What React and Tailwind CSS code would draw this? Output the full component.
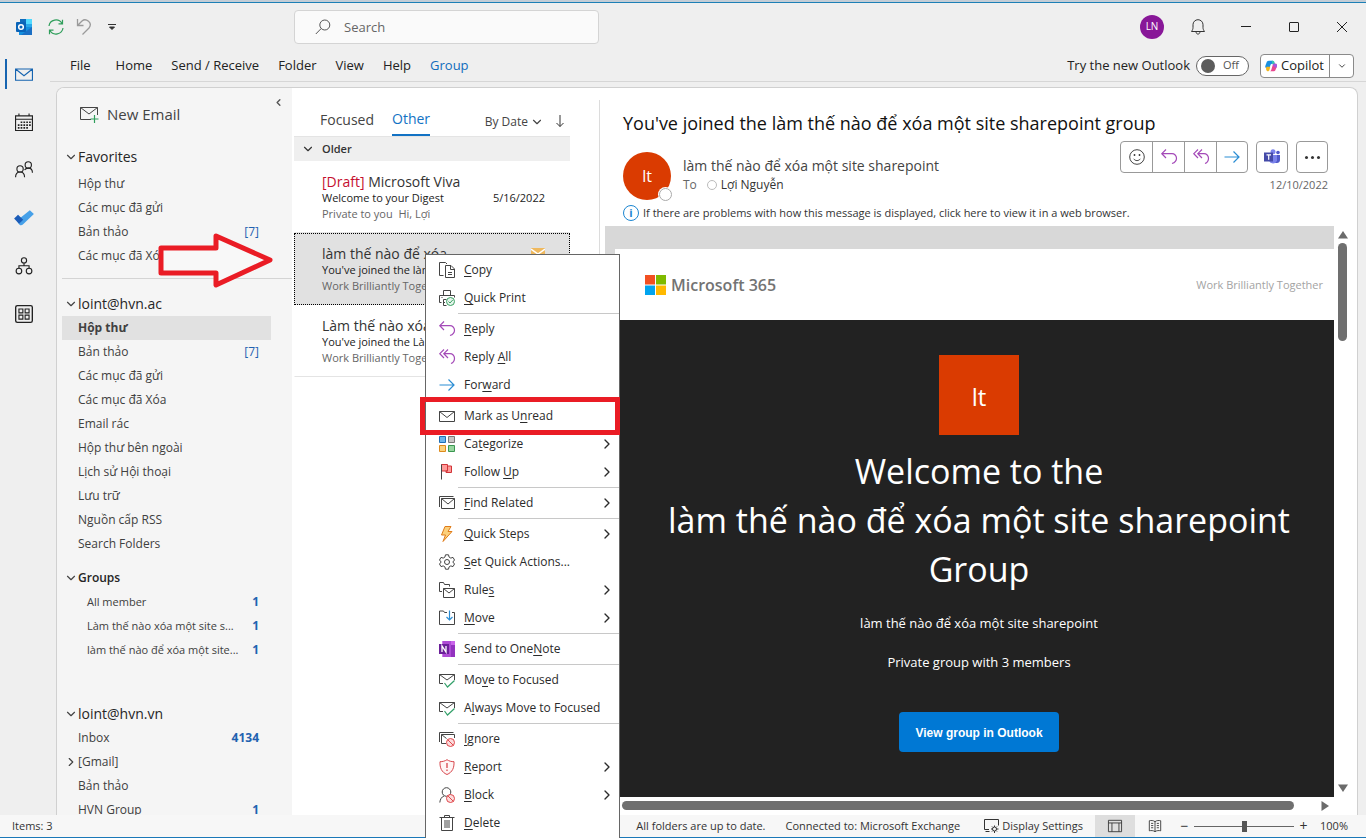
import React, { useState } from 'react';
import { ChevronDown, ChevronLeft, ChevronRight } from 'lucide-react';

const favorites = [
  { name: 'Hộp thư' },
  { name: 'Các mục đã gửi' },
  { name: 'Bản thảo', count: '[7]' },
  { name: 'Các mục đã Xóa' },
];

const accountFolders = [
  { name: 'Hộp thư', selected: true },
  { name: 'Bản thảo', count: '[7]' },
  { name: 'Các mục đã gửi' },
  { name: 'Các mục đã Xóa' },
  { name: 'Email rác' },
  { name: 'Hộp thư bên ngoài' },
  { name: 'Lịch sử Hội thoại' },
  { name: 'Lưu trữ' },
  { name: 'Nguồn cấp RSS' },
  { name: 'Search Folders' },
];

const groups = [
  { name: 'All member', count: '1', bold: true },
  { name: 'Làm thế nào xóa một site s...', count: '1', bold: true },
  { name: 'làm thế nào để xóa một site...', count: '1', bold: true },
];

const secondAccount = [
  { name: 'Inbox', count: '4134', bold: true },
  { name: '[Gmail]', closed: true },
  { name: 'Bản thảo' },
  { name: 'HVN Group', count: '1', bold: true },
];

const messages = [
  { draft: true, from: 'Microsoft Viva', subject: 'Welcome to your Digest', preview: 'Private to you  Hi, Lợi', date: '5/16/2022' },
  { from: 'làm thế nào để xóa', subject: "You've joined the làm", preview: 'Work Brilliantly Together', selected: true },
  { from: 'Làm thế nào xóa', subject: "You've joined the Làm", preview: 'Work Brilliantly Together' },
];

// '&' marks the access key of a command, '-' is a separator
const menuItems = [
  { label: '&Copy', icon: 'copy' },
  { label: '&Quick Print', icon: 'print' },
  '-',
  { label: '&Reply', icon: 'reply' },
  { label: 'Reply &All', icon: 'replyAll' },
  { label: 'For&ward', icon: 'forward' },
  '-',
  { label: 'Mark as U&nread', icon: 'mail', marked: true },
  { label: 'Ca&tegorize', icon: 'categorize', sub: true },
  { label: 'Follow &Up', icon: 'flag', sub: true },
  '-',
  { label: '&Find Related', icon: 'related', sub: true },
  '-',
  { label: '&Quick Steps', icon: 'bolt', sub: true },
  { label: '&Set Quick Actions...', icon: 'gear' },
  { label: 'Rule&s', icon: 'rules', sub: true },
  { label: '&Move', icon: 'move', sub: true },
  '-',
  { label: 'Send to One&Note', icon: 'onenote' },
  '-',
  { label: 'Mo&ve to Focused', icon: 'mailCheck' },
  { label: 'A&lways Move to Focused', icon: 'mailCheck' },
  '-',
  { label: '&Ignore', icon: 'ignore' },
  { label: '&Report', icon: 'report', sub: true },
  { label: '&Block', icon: 'block', sub: true },
  { label: '&Delete', icon: 'trash' },
];

const noSign = (
  <g stroke="#e0474c" fill="#fbdcdc">
    <circle cx="11.500" cy="11.500" r="4" />
    <path d="M8.700 8.700l5.600 5.600" />
  </g>
);

const iconShapes = {
  copy: (
    <>
      <path d="M4.500 13.500h-4v-13h6l1.500 1.500" />
      <path d="M6.500 3.500h5.500l3.500 3.500v8.500h-9zM11.500 3.500v4h4M9 10.500h4M9 12.500h4" fill="#fff" />
    </>
  ),
  print: (
    <>
      <path d="M4.500 5.500v-5h7v5M6 12.500h-1.500v-3h3M2.500 12.500h-2v-7h15v2M2.500 7.500h1" />
      <path d="M4.500 10v5.500h3" />
      <circle cx="11.500" cy="11.500" r="4" stroke="#3a9f62" fill="#e6f5ec" />
      <path d="M9.500 11.500l1.500 1.500 2.700-3" stroke="#3a9f62" />
    </>
  ),
  reply: <path d="M5 .5L.8 4.700 5 9M.8 4.700H11a4.500 4.500 0 0 1 4.500 4.500c0 2.500-1.500 4.300-4.500 5.300" stroke="#a44ab8" strokeWidth="1.2" />,
  replyAll: (
    <path d="M5 .5L.8 4.700 5 9M9 .5L4.800 4.700 9 9M4.800 4.700h6.200a4.500 4.500 0 0 1 4.500 4.500c0 2.500-1 4.300-3.500 5.300" stroke="#a44ab8" strokeWidth="1.2" />
  ),
  forward: <path d="M.5 8h14.500M9.500 2.500L15 8l-5.500 5.500" stroke="#2a8dd4" strokeWidth="1.2" />,
  mail: <path d="M.5 3.500h15v10H.5zM.5 3.500L8 9.500l7.500-6" />,
  categorize: (
    <>
      <path d="M.5 .5h6v6h-6z" fill="#6cb4ea" stroke="#1f6fb5" />
      <path d="M9.500 .5h6v6h-6z" fill="#c8c6c4" stroke="#7a7876" />
      <path d="M.5 9.500h6v6h-6z" fill="#fbd27c" stroke="#dd8a1c" />
      <path d="M9.500 9.500h6v6h-6z" fill="#98d6a0" stroke="#3a9650" />
    </>
  ),
  flag: (
    <>
      <path d="M2.500 .5h6v6.500h-6zM8.500 2h4v6.500H7V7h1.500z" fill="#ff9a98" stroke="#d13438" />
      <path d="M2.500 .5v15" stroke="#444" />
    </>
  ),
  related: <path d="M.5 12V1.500h14M2.500 3.500h13v10h-13zM2.500 3.500L9 9l6.500-5.500" />,
  bolt: <path d="M6 .5h6L9 5.500h4L4 15.500l2.500-6.500H2.500z" fill="#fbd07c" stroke="#e07b18" />,
  gear: (
    <>
      <path d="M6.500 .8h3l.6 2.300 1.700 1 2.200-.7 1.500 2.600L13.800 8l1.700 2-1.500 2.600-2.200-.7-1.700 1-.6 2.300h-3l-.6-2.300-1.700-1-2.200 .7L.5 10l1.700-2L.5 6 2 3.400l2.200 .7 1.700-1z" />
      <circle cx="8" cy="8" r="2.500" />
    </>
  ),
  rules: (
    <>
      <path d="M3 9.500H.5v-9h4l1 2h5v2" />
      <path d="M4.500 6.500h11v9h-11zM4.500 6.500l5.500 4.500 5.500-4.500" fill="#fff" />
    </>
  ),
  move: (
    <>
      <path d="M8 2.500H5.500l-1-1.500h-4v13.500h15V2.500H13" />
      <path d="M10.500 .5v9.500M7.500 7l3 3 3-3" stroke="#2a8dd4" strokeWidth="1.200" />
    </>
  ),
  onenote: (
    <>
      <path d="M3.500 0H16v16H3.500z" fill="#ca64ea" stroke="none" />
      <path d="M12 4h4v12h-4z" fill="#9332bf" stroke="none" />
      <path d="M3.500 0H12v16H3.500z" fill="#ae4bd5" stroke="none" />
      <path d="M0 3h10v10H0z" fill="#6b1f99" stroke="none" />
      <path d="M3 11V5l4 6V5" stroke="#fff" strokeWidth="1.3" />
    </>
  ),
  mailCheck: (
    <>
      <path d="M4 11.500H.5v-9h15V8M.5 2.500L8 8l7.500-5.500" />
      <path d="M5.500 11l3 4 7-6.500" stroke="#33a06a" strokeWidth="1.2" />
    </>
  ),
  ignore: (
    <>
      <path d="M.5 11V1.500h14M7 12.500H2.500v-9h13V7M2.500 3.500l5 4" />
      {noSign}
    </>
  ),
  report: (
    <>
      <path d="M8 .7c2 1.400 4.500 2 7 2 .3 6-1.500 10.500-7 12.800C2.500 13.200 .7 8.700 1 2.700c2.500 0 5-.6 7-2z" stroke="#d8464c" fill="#fff5f5" />
      <path d="M8 4v5M8 10.500V12" stroke="#d8464c" strokeWidth="1.3" />
    </>
  ),
  block: (
    <>
      <circle cx="7.500" cy="5" r="4.300" />
      <path d="M.8 15.500c.4-3.500 1.800-5.500 4.200-6.500" />
      {noSign}
    </>
  ),
  trash: <path d="M.5 2.500h15M5.500 2.500v-2h5v2M2.500 2.500v13h11v-13M6 5v8M8 5v8M10 5v8" />,
  calendar: (
    <>
      <path d="M.5 2.500h15v13H.5zM.5 5.500h15M3.500 .5v2M12.500 .5v2" />
      <path d="M5 8.200h9M2.500 10.700h11.500M2.500 13.200h9" strokeDasharray="1.500 1" strokeWidth="1.500" />
    </>
  ),
  people: (
    <>
      <circle cx="11.800" cy="3.500" r="2.800" />
      <circle cx="4.500" cy="7" r="2.800" />
      <path d="M.5 14.500c0-3 1.500-4.700 4-4.700s4 1.700 4 4.700M8.500 8c.7-1.200 1.800-1.700 3.300-1.700 2.400 0 3.700 1.700 3.700 4.200" />
    </>
  ),
  todo: (
    <>
      <path d="M4 14L1.500 10.500 13.200 1 16.800 4.500 7 13.800c-.9 .9-2.100 .9-3 .2z" fill="#46a0e8" stroke="none" />
      <path d="M-.8 8.500L2.700 5l4.600 4.500-3.700 3.700z" fill="#1b5cb8" stroke="none" />
    </>
  ),
  org: (
    <>
      <circle cx="8" cy="3" r="2.300" />
      <circle cx="3.500" cy="12.500" r="2.500" />
      <circle cx="12.500" cy="12.500" r="2.500" />
      <path d="M8 5.300v2.500M3.500 10V7.800h9V10" />
    </>
  ),
  apps: (
    <>
      <rect x=".6" y=".6" width="14.800" height="14.800" rx="1.500" strokeWidth="1.200" />
      <path d="M3.500 3.500h3.500v3.500H3.500zM9 3.500h3.500v3.500H9zM3.500 9h3.500v3.500H3.500zM9 9h3.500v3.500H9z" />
    </>
  ),
  smile: (
    <>
      <circle cx="8" cy="8" r="7.300" />
      <path d="M4.700 9.800c1.500 2.400 5.100 2.400 6.600 0" />
      <path d="M5.500 5v2M10.500 5v2" strokeWidth="1.500" />
    </>
  ),
  teams: (
    <>
      <circle cx="14" cy="3.500" r="1.800" fill="#5059c9" stroke="none" />
      <circle cx="9" cy="2.800" r="2.500" fill="#7b83eb" stroke="none" />
      <path d="M11 6h5v5c0 2-1.500 3-3 3h-2z" fill="#5059c9" stroke="none" />
      <path d="M5 6h8v5.500a4.200 4.200 0 0 1-8 0z" fill="#7b83eb" stroke="none" />
      <path d="M0 3.500h9v9H0z" fill="#444aa8" stroke="none" />
      <path d="M2.500 5.800h4.500M4.700 5.800v5" stroke="#fff" strokeWidth="1.200" />
    </>
  ),
  bell: <path d="M1.500 12.500h13c-1-1.500-1.500-2.500-1.500-4V5.700a5 5 0 0 0-10 0v2.800c0 1.500-.5 2.500-1.500 4zM6 12.700c.2 3.200 3.800 3.200 4 0" />,
  sync: (
    <path d="M1 7a7 7 0 0 1 13-2.500M14.500 .8v4h-4M15 9A7 7 0 0 1 2 11.500M1.500 15.200v-4h4" stroke="#2f9e5b" strokeWidth="1.200" />
  ),
  undo: <path d="M1.500 0v6.500h6M1.500 6.500l4.500-4.500C10-1.500 17 4 13 9l-6.500 6.500" stroke="#9a9a9a" strokeWidth="1.300" />,
  search: (
    <>
      <circle cx="9.800" cy="6" r="5" />
      <path d="M6.200 9.500L.8 15" />
    </>
  ),
  display: (
    <>
      <path d="M5 11.500H.5v-10h14v6M1.500 13.500h4" />
      <circle cx="10.500" cy="11" r="2" />
      <path d="M10.500 7.500v1.500M10.500 13v2M7 11h1.500M12.500 11h2M8 8.500l1 1M13 13.500l-1-1M13 8.500l-1 1M8 13.500l1-1" />
    </>
  ),
  layout: <path d="M.5 1.500h15v13H.5zM.5 4.500h15M4.500 4.500v10M12.500 4.500v10" />,
  book: <path d="M8 2.500v12M8 3C6 1.500 3.500 1.500 1.500 2v11.500c2-.5 4.500-.5 6.500 1 2-1.500 4.500-1.500 6.500-1V2C12.500 1.500 10 1.500 8 3zM3.500 5h2.500M3.500 7.500h2.500M3.500 10h2.500M10 5h2.500M10 7.500h2.500M10 10h2.500" />,
};

function Icon({ name, className = 'size-4' }) {
  return (
    <svg viewBox="0 0 16 16" fill="none" stroke="currentColor" className={`shrink-0 overflow-visible ${className}`} aria-hidden="true">
      {iconShapes[name]}
    </svg>
  );
}

function OutlookLogo() {
  return (
    <svg viewBox="0 0 16 16" className="size-4" aria-hidden="true">
      <path d="M4 0h12v9H4z" fill="#28a8ea" />
      <path d="M4 0h6v5H4z" fill="#0f6cbd" />
      <path d="M10 0h6v5h-6z" fill="#50d9ff" />
      <path d="M3 8l13 0v8H3z" fill="#1490df" />
      <path d="M16 8L5 16h11z" fill="#1b6fc4" />
      <rect y="3" width="10" height="10" rx="1" fill="#0a64b8" />
      <circle cx="5" cy="8" r="2.300" fill="none" stroke="#fff" strokeWidth="1.500" />
    </svg>
  );
}

function CopilotLogo() {
  return (
    <svg viewBox="0 0 16 16" className="size-3" aria-hidden="true">
      <path d="M5 1h5c1.500 0 2 1 2.400 2.500L13 5H9.500C8 5 7.500 6 7 7.500L6 11H3C.5 11 0 9.500 .5 7.500l1.500-4C2.500 2 3.500 1 5 1z" fill="#1a8fe0" />
      <path d="M2 9h5l-1 4c-.4 1.300-1.200 2-2.200 2C2 15 .5 12 2 9z" fill="#f2b61c" />
      <path d="M9 1h1.500c1.300 0 1.800 1 2.200 2.500L13.500 6H10z" fill="#37c5b0" />
      <path d="M11 15H6c1.500 0 2-1 2.500-2.500l1.500-5C10.500 6 11 5 12.500 5H14c2 0 2.300 2 1.800 3.500l-1.600 4C13.500 14.500 12.500 15 11 15z" fill="#e8488f" />
      <path d="M12.500 5H14c2 0 2.300 2 1.800 3.500L15 11l-4.500-4c.5-1.500 1-2 2-2z" fill="#a457e0" />
    </svg>
  );
}

function TitleBar() {
  return (
    <header className="flex h-12 shrink-0 items-center border-t border-[#1c7fb6]">
      <div className="flex w-[294px] items-center gap-4 pl-4">
        <OutlookLogo />
        <button aria-label="Send/Receive All Folders"><Icon name="sync" /></button>
        <button aria-label="Undo" className="-ml-1"><Icon name="undo" /></button>
        <button aria-label="Customize Quick Access Toolbar">
          <svg viewBox="0 0 8 8" className="size-2" fill="none" stroke="#333"><path d="M0 1.500h8M1.500 4L4 6.500 6.500 4z" fill="#333" /></svg>
        </button>
      </div>
      <label className="flex h-[34px] w-[305px] items-center gap-[13px] rounded-sm border border-[#d4d4d4] bg-[#fafafa] pl-5 text-[#555]">
        <Icon name="search" />
        <input type="text" placeholder="Search" className="w-full bg-transparent pt-[2px] text-[13px] outline-none placeholder:text-[#666]" />
      </label>
      <div className="ml-auto flex items-center">
        <button className="mr-[10px] size-6 rounded-full bg-[#881798] text-[10px] text-white">LN</button>
        <button aria-label="Notifications" className="flex w-12 justify-center text-[#333]"><Icon name="bell" /></button>
        <button aria-label="Minimize" className="flex w-12 justify-center"><span className="h-px w-[10px] bg-[#222]" /></button>
        <button aria-label="Maximize" className="flex w-12 justify-center"><span className="size-[10px] rounded-[1px] border border-[#222]" /></button>
        <button aria-label="Close" className="flex w-12 justify-center">
          <svg viewBox="0 0 10 10" className="size-[10px]" stroke="#222"><path d="M0 0l10 10M10 0L0 10" /></svg>
        </button>
      </div>
    </header>
  );
}

function Ribbon() {
  const [isNew, setIsNew] = useState(false);
  const tabs = ['File', 'Home', 'Send / Receive', 'Folder', 'View', 'Help', 'Group'];

  return (
    <nav className="flex h-8 shrink-0 items-center border-b border-[#d6d6d6] pr-3 pl-5 text-[13px] text-[#222]">
      <div className="flex gap-[19px] pt-px">
        {tabs.map((tab) => (
          <button key={tab} className={tab === 'Group' ? 'text-[#0f6cbd]' : 'first:mr-[6px]'}>{tab}</button>
        ))}
      </div>
      <div className="ml-auto flex items-center">
        <span id="try-new" className="mr-[6px]">Try the new Outlook</span>
        <button
          role="switch"
          aria-checked={isNew}
          aria-labelledby="try-new"
          onClick={() => setIsNew(!isNew)}
          className="mr-[11px] flex h-5 w-[53px] items-center gap-2 rounded-full border border-[#666] bg-white pl-1 text-[11px] text-[#555]"
        >
          <span className="size-[14px] rounded-full bg-[#5c5c5c]" />
          {isNew ? 'On' : 'Off'}
        </button>
        <div className="flex h-6 w-[94px] items-stretch rounded-sm border border-[#8a8a8a] bg-white">
          <button className="flex flex-1 items-center gap-1 pl-1"><CopilotLogo />Copilot</button>
          <button aria-label="Copilot options" className="flex w-6 items-center justify-center border-l border-[#8a8a8a]">
            <ChevronDown size={10} />
          </button>
        </div>
      </div>
    </nav>
  );
}

function AppRail() {
  const apps = [
    { icon: 'mail', label: 'Mail' },
    { icon: 'calendar', label: 'Calendar' },
    { icon: 'people', label: 'People' },
    { icon: 'todo', label: 'To Do' },
    { icon: 'org', label: 'Org Explorer' },
    { icon: 'apps', label: 'More Apps' },
  ];
  return (
    <aside className="w-[50px] shrink-0">
      {apps.map((app) => (
        <button
          key={app.icon}
          aria-label={app.label}
          className={`flex h-12 w-12 items-center justify-center ${app.icon === 'mail' ? 'text-[#1664b0]' : 'text-[#222]'}`}
        >
          {app.icon === 'mail' && <span className="mr-2 -ml-[10px] h-[30px] w-[2px] bg-[#1664b0]" />}
          <Icon name={app.icon} className="size-[18px]" />
        </button>
      ))}
    </aside>
  );
}

function FolderHeading({ children, small }) {
  return (
    <button className={`flex w-full items-center pl-[2px] ${small ? 'h-6 text-xs font-semibold' : 'h-[25px] text-sm'} text-[#262626]`}>
      <ChevronDown size={14} strokeWidth={2} className="text-[#444]" />
      {children}
    </button>
  );
}

function FolderList({ folders, nested }) {
  return (
    <ul>
      {folders.map((folder) => (
        <li key={folder.name}>
          <button
            className={`flex h-6 w-[209px] items-center pr-3 text-left text-xs whitespace-nowrap text-[#404040] ${nested ? 'pl-[25px]' : folder.closed ? 'pl-[2px]' : 'pl-4'} ${folder.selected ? 'bg-[#e1e1e1] font-bold text-[#222]' : ''}`}
          >
            {folder.closed && <ChevronRight size={14} />}
            <span className={nested ? 'text-[11px]' : ''}>{folder.name}</span>
            <span className={`ml-auto text-[#1f62b0] ${folder.bold ? 'font-bold' : ''}`}>{folder.count}</span>
          </button>
        </li>
      ))}
    </ul>
  );
}

function FolderPane() {
  return (
    <aside className="w-[235px] shrink-0 overflow-hidden bg-[#f5f5f5] pl-[5px]">
      <div className="flex h-14 items-center justify-between pr-2">
        <button className="mb-1 flex items-center gap-2 pl-[18px] text-[15px] text-[#444]">
          <svg viewBox="0 0 19 16" className="h-4 w-[19px] overflow-visible" fill="none" stroke="#444">
            <path d="M11 13.500H.5v-12h17V9M.5 1.500L9 8l8.500-6.500" />
            <path d="M14.500 9v8M10.500 13h8" stroke="#2f9e5b" strokeWidth="1.200" />
          </svg>
          New Email
        </button>
        <button aria-label="Collapse folder pane" className="mb-7"><ChevronLeft size={11} strokeWidth={3} className="text-[#555]" /></button>
      </div>
      <div className="h-[135px] border-b border-[#d4d4d4]">
        <FolderHeading>Favorites</FolderHeading>
        <div className="pt-[3px]">
          <FolderList folders={favorites} />
        </div>
      </div>
      <div className="pt-3">
        <FolderHeading>loint@hvn.ac</FolderHeading>
        <FolderList folders={accountFolders} />
      </div>
      <div className="pt-[10px]">
        <FolderHeading small>Groups</FolderHeading>
        <FolderList folders={groups} nested />
      </div>
      <div className="pt-[39px]">
        <FolderHeading>loint@hvn.vn</FolderHeading>
        <FolderList folders={secondAccount} />
      </div>
    </aside>
  );
}

function Message({ message }) {
  return (
    <li className={`flex h-[72px] w-[276px] flex-col justify-center overflow-hidden pr-6 pl-[27px] text-[11px] whitespace-nowrap ${message.selected ? 'border border-dotted border-black bg-[#e1e1e1]' : 'border border-transparent border-b-[#e4e4e4]'}`}>
      <div className="flex h-[17px] items-center justify-between text-sm text-[#333]">
        <span>
          {message.draft && <span className="text-[#c50f2f]">[Draft] </span>}
          {message.from}
        </span>
        {message.selected && (
          <svg viewBox="0 0 14 11" className="h-[11px] w-[14px]"><path d="M0 0h14v11H0z" fill="#efb95f" /><path d="M0 1l7 5 7-5" fill="none" stroke="#fff" strokeWidth="1.500" /></svg>
        )}
      </div>
      <div className="flex h-4 items-center justify-between font-medium text-[#222]">
        <span>{message.subject}</span>
        <span className="font-normal">{message.date}</span>
      </div>
      <div className="h-[15px] leading-[15px] whitespace-pre text-[#666]">{message.preview}</div>
    </li>
  );
}

function MessageList() {
  return (
    <section className="w-[307px] shrink-0 pl-[2px]">
      <div className="flex h-[49px] w-[276px] items-end border-b border-[#e4e4e4] pr-[6px] pl-[26px] text-[#444]">
        <button className="h-8 pb-px text-sm">Focused</button>
        <button className="ml-[18px] h-8 border-b-2 border-[#1272c4] text-sm text-[#1272c4]">Other</button>
        <button className="mb-[6px] ml-auto flex items-center gap-[2px] text-xs">By Date <ChevronDown size={14} /></button>
        <button aria-label="Sort order" className="mb-[9px] ml-3">
          <svg viewBox="0 0 8 12" className="h-3 w-2" fill="none" stroke="#333"><path d="M4 0v11.500M.5 8L4 11.500 7.500 8" /></svg>
        </button>
      </div>
      <button className="flex h-6 w-[276px] items-center gap-[7px] bg-[#efefef] pl-[7px] text-[11px] font-semibold text-[#333]">
        <ChevronDown size={14} />
        Older
      </button>
      <ul>
        {messages.map((m) => <Message key={m.from} message={m} />)}
      </ul>
    </section>
  );
}

function MessageActions() {
  return (
    <div className="flex gap-2">
      <div className="flex h-8 divide-x divide-[#999] rounded-sm border border-[#999] text-[#444]">
        <button aria-label="React" className="flex w-8 items-center justify-center"><Icon name="smile" /></button>
        <button aria-label="Reply" className="flex w-8 items-center justify-center"><Icon name="reply" /></button>
        <button aria-label="Reply All" className="flex w-8 items-center justify-center"><Icon name="replyAll" /></button>
        <button aria-label="Forward" className="flex w-[30px] items-center justify-center"><Icon name="forward" /></button>
      </div>
      <button aria-label="Share to Teams" className="flex size-8 items-center justify-center rounded-sm border border-[#999]"><Icon name="teams" /></button>
      <button aria-label="More actions" className="flex size-8 items-center justify-center gap-[3px] rounded-sm border border-[#999]">
        <span className="size-[3px] rounded-full bg-[#333]" />
        <span className="size-[3px] rounded-full bg-[#333]" />
        <span className="size-[3px] rounded-full bg-[#333]" />
      </button>
    </div>
  );
}

function EmailBody() {
  return (
    <div className="flex min-w-0 flex-1 flex-col overflow-hidden bg-[#d8d8d8] pt-[23px] pl-[10px]">
      <div className="flex h-[71px] shrink-0 items-center justify-between bg-white pr-[11px] pl-[30px]">
        <div className="flex items-center gap-[5px] text-base font-semibold text-[#737373]">
          <svg viewBox="0 0 21 20" className="h-5 w-[21px]">
            <path d="M0 0h10v9.500H0z" fill="#f25022" />
            <path d="M11 0h10v9.500H11z" fill="#7fba00" />
            <path d="M0 10.500h10V20H0z" fill="#00a4ef" />
            <path d="M11 10.500h10V20H11z" fill="#ffb900" />
          </svg>
          Microsoft 365
        </div>
        <span className="pt-[2px] text-[11px] text-[#a3a3a3]">Work Brilliantly Together</span>
      </div>
      <div className="flex flex-1 flex-col items-center bg-[#222] pt-[35px] pl-[9px] text-center text-white">
        <div className="flex size-20 shrink-0 items-center justify-center bg-[#da3b01] pt-1 text-2xl">lt</div>
        <h2 className="mt-3 text-[34px] leading-[49px] whitespace-nowrap">
          Welcome to the<br />làm thế nào để xóa một site sharepoint<br />Group
        </h2>
        <p className="mt-[19px] text-[13px] leading-5">làm thế nào để xóa một site sharepoint</p>
        <p className="mt-[19px] text-[13px] leading-5">Private group with 3 members</p>
        <a href="#group" className="mt-10 flex h-10 w-40 shrink-0 items-center justify-center rounded-sm bg-[#0078d4] pt-[2px] font-['Liberation_Sans',sans-serif] text-xs font-bold">
          View group in Outlook
        </a>
      </div>
    </div>
  );
}

function ReadingPane() {
  return (
    <main className="flex min-w-0 flex-1 flex-col pr-[10px] pl-[5px]">
      <div className="h-[138px] shrink-0 pt-[22px] pr-[19px] pl-[18px]">
        <h1 className="text-lg leading-[26px] whitespace-nowrap text-[#111]">You've joined the làm thế nào để xóa một site sharepoint group</h1>
        <div className="mt-[5px] flex items-start">
          <div className="relative mt-[11px] flex size-12 items-center justify-center rounded-full bg-[#da3b01] text-white">
            lt
            <span className="absolute -right-px -bottom-px size-[13px] rounded-full border border-[#aaa] bg-white ring-1 ring-white" />
          </div>
          <div className="mt-[15px] ml-3 whitespace-nowrap">
            <div className="text-sm leading-5 text-[#444]">làm thế nào để xóa một site sharepoint</div>
            <div className="flex items-center text-xs leading-[18px] text-[#666]">
              To
              <span className="mr-1 ml-[10px] size-[10px] rounded-full border border-[#bbb]" />
              <span className="text-[#333]">Lợi Nguyễn</span>
            </div>
          </div>
          <div className="ml-auto text-right">
            <MessageActions />
            <div className="mt-[3px] text-[11px] leading-[18px] text-[#666]">12/10/2022</div>
          </div>
        </div>
        <button className="mt-[5px] flex items-center gap-1 text-[11px] leading-4 whitespace-nowrap text-[#333]">
          <span className="flex size-4 items-center justify-center rounded-full border border-[#1c86d1] text-[11px] font-bold text-[#1c86d1]">i</span>
          If there are problems with how this message is displayed, click here to view it in a web browser.
        </button>
      </div>
      <div className="flex min-h-0 flex-1">
        <EmailBody />
        <div className="flex w-[13px] flex-col items-center py-[5px] pl-1">
          <svg viewBox="0 0 10 8" className="h-2 w-[10px]"><path d="M5 0l5 7.500H0z" fill="#6b6b6b" /></svg>
          <div className="mt-1 h-[98px] w-[9px] rounded-full bg-[#6f6f6f]" />
          <svg viewBox="0 0 10 8" className="mt-auto h-2 w-[10px]"><path d="M5 8l5-7.500H0z" fill="#6b6b6b" /></svg>
        </div>
      </div>
      <div className="flex h-[18px] shrink-0 items-center justify-between pr-[18px] pb-px pl-[17px]">
        <div className="h-[9px] w-[95%] rounded-full bg-[#6f6f6f]" />
        <svg viewBox="0 0 8 10" className="h-[10px] w-2"><path d="M8 5L.5 0v10z" fill="#6b6b6b" /></svg>
      </div>
    </main>
  );
}

function MenuLabel({ label }) {
  const at = label.indexOf('&');
  return (
    <span>
      {label.slice(0, at)}
      <span className="underline underline-offset-2">{label[at + 1]}</span>
      {label.slice(at + 2)}
    </span>
  );
}

function ContextMenu() {
  return (
    <div role="menu" className="absolute top-[252px] left-[425px] w-[195px] border border-[#666] bg-white py-px text-xs text-[#2b2b2b]">
      {menuItems.map((item, i) =>
        item === '-' ? (
          <div key={i} className="ml-8 flex h-[3px] items-center"><div className="h-px w-full bg-[#c8c8c8]" /></div>
        ) : (
          <button key={i} role="menuitem" className="relative flex h-7 w-full items-center gap-[9px] pr-2 pl-[13px] text-left whitespace-nowrap">
            <Icon name={item.icon} className="size-4 text-[#444]" />
            <MenuLabel label={item.label} />
            {item.sub && <ChevronRight size={16} strokeWidth={2} className="-mr-1 ml-auto" />}
            {item.marked && <span className="absolute -inset-y-[5px] -right-px -left-[6px] border-[5px] border-[#ea1c25]" />}
          </button>
        )
      )}
    </div>
  );
}

function StatusBar() {
  const [zoom, setZoom] = useState(50);
  return (
    <footer className="flex h-[23px] shrink-0 items-center border-b border-[#1a78b8] bg-[#f7f7f7] pr-[18px] pl-3 text-[11px] whitespace-nowrap text-[#333]">
      <span>Items: 3</span>
      <div className="ml-auto flex items-center self-stretch">
        <span>All folders are up to date.</span>
        <span className="ml-5">Connected to: Microsoft Exchange</span>
        <button className="ml-6 flex items-center gap-[2px]"><Icon name="display" />Display Settings</button>
        <button aria-label="Normal view" className="ml-3 flex w-10 items-center justify-center self-stretch bg-[#dedede]"><Icon name="layout" className="size-[14px]" /></button>
        <button aria-label="Reading view" className="flex w-10 justify-center"><Icon name="book" className="size-[14px]" /></button>
        <button aria-label="Zoom out" className="ml-[5px] w-[9px] text-sm leading-4">−</button>
        <input
          type="range"
          aria-label="Zoom"
          value={zoom}
          onChange={(e) => setZoom(e.target.value)}
          className="mx-[5px] h-px w-[100px] appearance-none bg-[#666] [&::-webkit-slider-thumb]:h-[11px] [&::-webkit-slider-thumb]:w-[5px] [&::-webkit-slider-thumb]:appearance-none [&::-webkit-slider-thumb]:bg-[#555]"
        />
        <button aria-label="Zoom in" className="w-[9px] text-sm leading-4">+</button>
        <span className="ml-3">100%</span>
      </div>
    </footer>
  );
}

export default function App() {
  return (
    <div className="relative flex h-screen flex-col overflow-hidden border-t-2 border-[#c3cdd6] bg-[#efefef] font-['Open_Sans','Noto_Sans',sans-serif]">
      <TitleBar />
      <div className="flex min-h-0 flex-1">
        <AppRail />
        <div className="flex min-w-0 flex-1 flex-col">
          <Ribbon />
          <div className="mt-[5px] mr-2 ml-[6px] flex min-h-0 flex-1 overflow-hidden rounded-t-lg border border-b-0 border-[#d0d0d0] bg-white">
            <FolderPane />
            <MessageList />
            <div className="mt-3 w-px bg-[#dcdcdc]" />
            <ReadingPane />
          </div>
        </div>
      </div>
      <StatusBar />

      {/* arrow pointing at the selected message */}
      <svg viewBox="0 0 116 56" className="absolute top-[230px] left-[158px] h-14 w-[116px]" aria-hidden="true">
        <path d="M3 16h55V4l54 24-54 25V41H3z" fill="#f8f8f8" stroke="#ea1c25" strokeWidth="5" strokeLinejoin="round" />
      </svg>
      <ContextMenu />
    </div>
  );
}
